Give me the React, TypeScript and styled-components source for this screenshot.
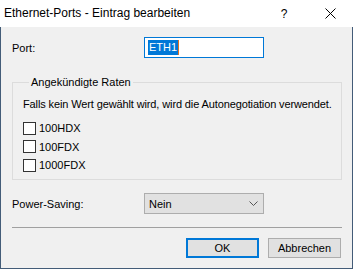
import React from 'react'
import styled, { createGlobalStyle } from 'styled-components'

const GlobalStyle = createGlobalStyle`
  html, body {
    margin: 0;
    padding: 0;
    background: #ffffff;
  }
  body {
    font-family: 'Liberation Sans', Arial, sans-serif;
    font-size: 11px;
    color: #000000;
  }
`

const Window = styled.div`
  width: 353px;
  height: 269px;
  display: flex;
  flex-direction: column;
  background: #f0f0f0;
`

const TitleBar = styled.div`
  height: 27px;
  flex-shrink: 0;
  display: flex;
  align-items: center;
  background: #ffffff;
  padding-left: 4px;
  font-family: 'Liberation Sans', Arial, sans-serif;
  font-size: 12px;
`

const Title = styled.div`
  flex: 1;
  padding-bottom: 1px;
`

const TitleButton = styled.div<{ $w: number }>`
  width: ${({ $w }) => $w}px;
  height: 27px;
  display: flex;
  align-items: center;
  justify-content: center;
`

const Body = styled.div`
  flex: 1;
  display: flex;
  flex-direction: column;
  border: 1px solid #435c78;
  border-top: none;
  padding: 0 10px 0 11px;
`

const FieldRow = styled.div<{ $top: number }>`
  display: flex;
  align-items: center;
  margin-top: ${({ $top }) => $top}px;
  height: 21px;
`

const Label = styled.div`
  width: 132px;
`

const TextInput = styled.div`
  width: 120px;
  height: 21px;
  box-sizing: border-box;
  border: 1px solid #0078d7;
  background: #ffffff;
  display: flex;
  align-items: center;
  padding-left: 3px;
`

const Selected = styled.span`
  background: #0078d7;
  color: #ffffff;
  padding: 1px 1px 2px 1px;
  border-right: 1px solid #e07020;
`

const Group = styled.fieldset`
  margin: 18px 0 0 0;
  padding: 9px 0 10px 10px;
  border: 1px solid #dcdcdc;
  height: 104px;
  box-sizing: border-box;
`

const Legend = styled.legend`
  margin-left: 6px;
  padding: 0 2px 0 2px;
  line-height: 13px;
`

const Hint = styled.div`
  margin-bottom: 9px;
  letter-spacing: -0.12px;
`

const CheckRow = styled.label`
  display: flex;
  align-items: center;
  height: 18.5px;
  gap: 3px;
`

const Box = styled.span`
  width: 13px;
  height: 13px;
  box-sizing: border-box;
  border: 1px solid #333333;
  background: #ffffff;
`

const Select = styled.div`
  width: 120px;
  height: 21px;
  box-sizing: border-box;
  border: 1px solid #adadad;
  background: #e1e1e1;
  display: flex;
  align-items: center;
  justify-content: space-between;
  padding: 0 5px 0 4px;
`

const Separator = styled.div`
  margin-top: 13px;
  height: 1px;
  background: #a0a0a0;
`

const ButtonRow = styled.div`
  display: flex;
  justify-content: flex-end;
  gap: 9px;
  margin-top: 10px;
  padding-right: 1px;
`

const Button = styled.div<{ $default?: boolean }>`
  width: 73px;
  height: 20px;
  box-sizing: border-box;
  display: flex;
  align-items: center;
  justify-content: center;
  background: #e1e1e1;
  border: ${({ $default }) => ($default ? '2px solid #0078d7' : '1px solid #adadad')};
`

const rates = ['100HDX', '100FDX', '1000FDX']

export default function App() {
  return (
    <>
      <GlobalStyle />
      <Window>
        <TitleBar>
          <Title>Ethernet-Ports - Eintrag bearbeiten</Title>
          <TitleButton $w={46}>?</TitleButton>
          <TitleButton $w={46}>
            <svg width="11" height="11" viewBox="0 0 11 11">
              <path d="M0.5 0.5 L10.5 10.5 M10.5 0.5 L0.5 10.5" stroke="#000" strokeWidth="1" />
            </svg>
          </TitleButton>
        </TitleBar>
        <Body>
          <FieldRow $top={10}>
            <Label>Port:</Label>
            <TextInput>
              <Selected>ETH1</Selected>
            </TextInput>
          </FieldRow>
          <Group>
            <Legend>Angekündigte Raten</Legend>
            <Hint>Falls kein Wert gewählt wird, wird die Autonegotiation verwendet.</Hint>
            {rates.map((r) => (
              <CheckRow key={r}>
                <Box />
                {r}
              </CheckRow>
            ))}
          </Group>
          <FieldRow $top={13}>
            <Label>Power-Saving:</Label>
            <Select>
              Nein
              <svg width="9" height="5" viewBox="0 0 9 5">
                <path d="M0.5 0.5 L4.5 4.5 L8.5 0.5" fill="none" stroke="#555" strokeWidth="1" />
              </svg>
            </Select>
          </FieldRow>
          <Separator />
          <ButtonRow>
            <Button $default>OK</Button>
            <Button>Abbrechen</Button>
          </ButtonRow>
        </Body>
      </Window>
    </>
  )
}
